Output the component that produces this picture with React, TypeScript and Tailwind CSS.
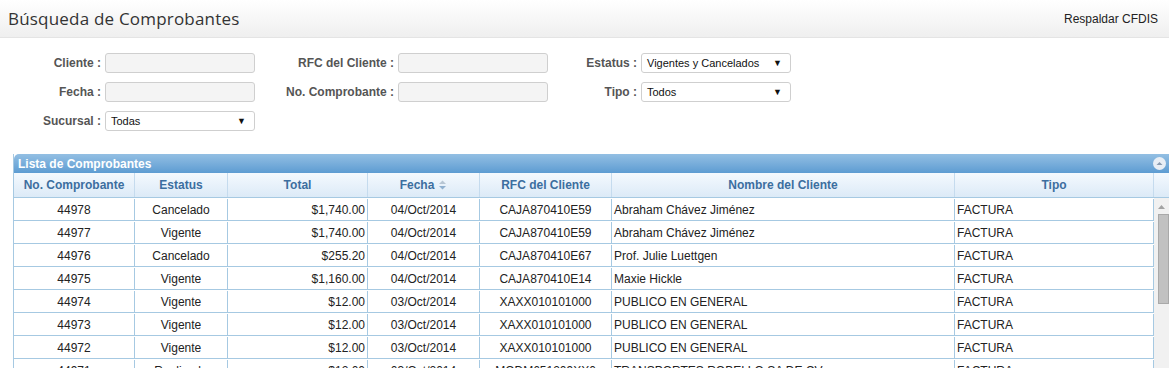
import React from "react";

type Row = {
  no: string;
  estatus: string;
  total: string;
  fecha: string;
  rfc: string;
  nombre: string;
  tipo: string;
};

const rows: Row[] = [
  { no: "44978", estatus: "Cancelado", total: "$1,740.00", fecha: "04/Oct/2014", rfc: "CAJA870410E59", nombre: "Abraham Chávez Jiménez", tipo: "FACTURA" },
  { no: "44977", estatus: "Vigente", total: "$1,740.00", fecha: "04/Oct/2014", rfc: "CAJA870410E59", nombre: "Abraham Chávez Jiménez", tipo: "FACTURA" },
  { no: "44976", estatus: "Cancelado", total: "$255.20", fecha: "04/Oct/2014", rfc: "CAJA870410E67", nombre: "Prof. Julie Luettgen", tipo: "FACTURA" },
  { no: "44975", estatus: "Vigente", total: "$1,160.00", fecha: "04/Oct/2014", rfc: "CAJA870410E14", nombre: "Maxie Hickle", tipo: "FACTURA" },
  { no: "44974", estatus: "Vigente", total: "$12.00", fecha: "03/Oct/2014", rfc: "XAXX010101000", nombre: "PUBLICO EN GENERAL", tipo: "FACTURA" },
  { no: "44973", estatus: "Vigente", total: "$12.00", fecha: "03/Oct/2014", rfc: "XAXX010101000", nombre: "PUBLICO EN GENERAL", tipo: "FACTURA" },
  { no: "44972", estatus: "Vigente", total: "$12.00", fecha: "03/Oct/2014", rfc: "XAXX010101000", nombre: "PUBLICO EN GENERAL", tipo: "FACTURA" },
  { no: "44971", estatus: "Realizado", total: "$12.00", fecha: "03/Oct/2014", rfc: "MODM651209XX0", nombre: "TRANSPORTES ROBELLO SA DE CV", tipo: "FACTURA" },
];

const cols = "grid grid-cols-[121px_93px_140px_112px_132px_343px_199px]";

function TextInput({ className = "" }: { className?: string }) {
  return (
    <div
      className={`h-[20px] w-[150px] rounded-[3px] border border-[#cfcfcf] bg-[#f4f4f4] ${className}`}
    />
  );
}

function Select({ value }: { value: string }) {
  return (
    <div className="flex h-[20px] w-[150px] items-center justify-between rounded-[3px] border border-[#cfcfcf] bg-white pl-[5px] pr-[8px] text-[11px] text-[#111]">
      <span>{value}</span>
      <span className="text-[9px] leading-none">▼</span>
    </div>
  );
}

function Label({ text, w }: { text: string; w: string }) {
  return (
    <div className={`${w} pr-1 text-right text-[12px] font-bold text-[#555]`}>{text}</div>
  );
}

function SortIcon() {
  return (
    <svg width="9" height="12" viewBox="0 0 9 12" className="ml-[4px] inline-block">
      <path d="M1 5 L4.5 1.5 L8 5 Z" fill="#b7c6d4" />
      <path d="M1 7 L4.5 10.5 L8 7 Z" fill="#8fb0cf" />
    </svg>
  );
}

export default function App() {
  return (
    <div className="h-[368px] w-[1169px] overflow-hidden bg-white font-['Liberation_Sans',Arial,sans-serif] text-[12px] text-[#222]">
      {/* Title bar */}
      <div className="flex h-[38px] items-center justify-between border-b border-[#e4e4e4] bg-gradient-to-b from-white to-[#efefef] pl-[8px] pr-[11px]">
        <h1 className="font-['Open_Sans',sans-serif] text-[17px] font-normal tracking-[0.2px] text-[#333]">
          Búsqueda de Comprobantes
        </h1>
        <span className="text-[12px] text-[#222]">Respaldar CFDIS</span>
      </div>

      {/* Filters */}
      <div className="flex flex-col gap-[9px] pt-[15px]">
        <div className="flex items-center">
          <Label text="Cliente :" w="w-[105px]" />
          <TextInput />
          <Label text="RFC del Cliente :" w="w-[143px]" />
          <TextInput />
          <Label text="Estatus :" w="w-[93px]" />
          <Select value="Vigentes y Cancelados" />
        </div>
        <div className="flex items-center">
          <Label text="Fecha :" w="w-[105px]" />
          <TextInput />
          <Label text="No. Comprobante :" w="w-[143px]" />
          <TextInput />
          <Label text="Tipo :" w="w-[93px]" />
          <Select value="Todos" />
        </div>
        <div className="flex items-center">
          <Label text="Sucursal :" w="w-[105px]" />
          <Select value="Todas" />
        </div>
      </div>

      {/* Grid */}
      <div className="ml-[13px] mt-[23px] border-l border-[#a6c9e2]">
        <div className="flex h-[19px] items-center justify-between rounded-tl-[5px] bg-gradient-to-b from-[#93bfe3] to-[#5d9cd2] pl-[4px] pr-[3px]">
          <span className="text-[12px] font-bold text-white">Lista de Comprobantes</span>
          <span className="flex h-[13px] w-[13px] items-center justify-center rounded-full bg-[#e8eef5]">
            <svg width="7" height="5" viewBox="0 0 7 5">
              <path d="M0.5 4 L3.5 1 L6.5 4 Z" fill="#8a9bb0" />
            </svg>
          </span>
        </div>

        {/* Column headers */}
        <div className="flex h-[25px] border-b border-[#a6c9e2] bg-gradient-to-b from-[#f4f9fe] to-[#dceaf7] text-[12px] font-bold text-[#3c6e9f]">
          <div className={cols}>
            <div className="flex items-center justify-center border-r border-[#c5dbee]">No. Comprobante</div>
            <div className="flex items-center justify-center border-r border-[#c5dbee]">Estatus</div>
            <div className="flex items-center justify-center border-r border-[#c5dbee]">Total</div>
            <div className="flex items-center justify-center border-r border-[#c5dbee]">
              Fecha
              <SortIcon />
            </div>
            <div className="flex items-center justify-center border-r border-[#c5dbee]">RFC del Cliente</div>
            <div className="flex items-center justify-center border-r border-[#c5dbee]">Nombre del Cliente</div>
            <div className="flex items-center justify-center border-r border-[#c5dbee]">Tipo</div>
          </div>
          <div className="flex-1" />
        </div>

        {/* Body */}
        <div className="flex">
          <div className="flex flex-col">
            {rows.map((r) => (
              <div key={r.no} className={`${cols} h-[23px] border-b border-[#a6c9e2] pt-[1px] text-[#222]`}>
                <div className="flex items-center justify-center border-r border-[#a6c9e2]">{r.no}</div>
                <div className="flex items-center justify-center border-r border-[#a6c9e2]">{r.estatus}</div>
                <div className="flex items-center justify-end border-r border-[#a6c9e2] pr-[2px]">{r.total}</div>
                <div className="flex items-center justify-center border-r border-[#a6c9e2]">{r.fecha}</div>
                <div className="flex items-center justify-center border-r border-[#a6c9e2]">{r.rfc}</div>
                <div className="flex items-center border-r border-[#a6c9e2] pl-[2px]">{r.nombre}</div>
                <div className="flex items-center border-r border-[#a6c9e2] pl-[2px]">{r.tipo}</div>
              </div>
            ))}
          </div>

          {/* Scrollbar */}
          <div className="flex flex-1 flex-col items-center bg-[#f1f1f1] pt-[7px]">
            <svg width="7" height="4" viewBox="0 0 7 4">
              <path d="M0 4 L3.5 0 L7 4 Z" fill="#a3a3a3" />
            </svg>
            <div className="ml-[3px] mt-[5px] h-[90px] w-[11px] border border-[#a9a9a9] bg-[#c1c1c1]" />
          </div>
        </div>
      </div>
    </div>
  );
}
